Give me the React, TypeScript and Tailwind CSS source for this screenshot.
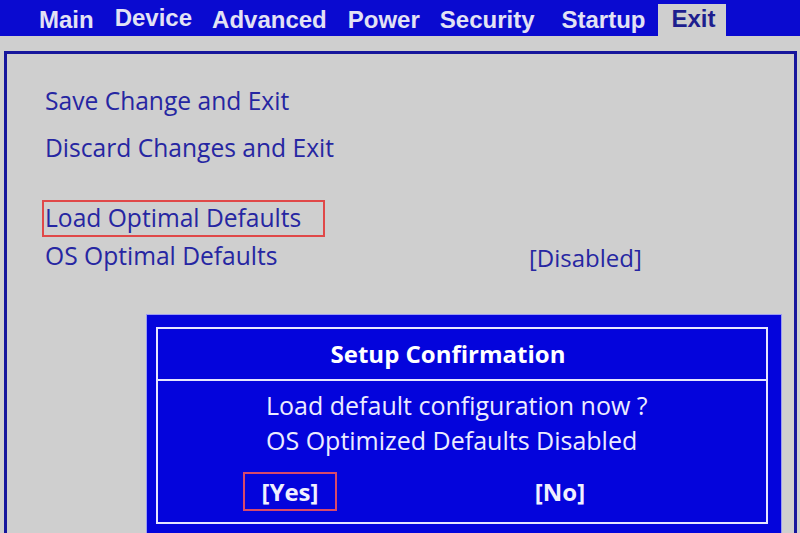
import React from "react";

const tabs = [
  { label: "Main", cls: "ml-[39px]" },
  { label: "Device", cls: "ml-[21px] pb-[5px]" },
  { label: "Advanced", cls: "ml-[20px]" },
  { label: "Power", cls: "ml-[21px]" },
  { label: "Security", cls: "ml-[20px]" },
  { label: "Startup", cls: "ml-[27px]" },
];

export default function App() {
  return (
    <div className="relative w-[800px] h-[533px] overflow-hidden bg-[#cfcfcf]">
      {/* Top tab bar */}
      <div
        className="flex h-[36px] pt-[4px] bg-[#0a0ad0] text-[24px] font-bold leading-none text-[#e2e2f4]"
        style={{ fontFamily: '"Liberation Sans", Arial, sans-serif' }}
      >
        {tabs.map((t) => (
          <div key={t.label} className={`flex items-center ${t.cls}`}>
            {t.label}
          </div>
        ))}
        <div className="ml-[12px] flex items-center w-[68px] pl-[14px] pb-[3px] bg-[#cfcfcf] text-[#1e1e8e]">
          Exit
        </div>
      </div>

      {/* Main frame */}
      <div
        className="mt-[15px] ml-[4px] w-[793px] h-[482px] border-[3px] border-b-0 border-[#16169c] pl-[38px] pt-[29px] text-[24.6px] leading-none text-[#2626a2]"
        style={{ fontFamily: '"Open Sans", "Noto Sans", sans-serif' }}
      >
        <div className="flex items-center h-[36px]">Save Change and Exit</div>
        <div className="flex items-center h-[36px] mt-[11px]">Discard Changes and Exit</div>
        <div className="flex items-center h-[37px] mt-[34px] -ml-[3px] w-[283px] pl-[1px] border-2 border-[#e04848]">
          Load Optimal Defaults
        </div>
        <div className="grid grid-cols-[484px_auto] items-center h-[36px] mt-[1px]">
          <span>OS Optimal Defaults</span>
          <span className="pt-[3px] text-[24px]">[Disabled]</span>
        </div>
      </div>

      {/* Setup Confirmation dialog (overlay) */}
      <div
        className="absolute left-[146px] top-[314px] w-[636px] h-[240px] bg-[#0404dc] border border-[#9c9cf2] pl-[9px] pt-[12px] pr-[13px]"
        style={{ fontFamily: '"Open Sans", "Noto Sans", sans-serif' }}
      >
        <div className="w-[612px] h-[197px] border-2 border-[#e6e6ff] flex flex-col text-[#ececff]">
          <div className="flex items-center justify-center h-[50px] pr-[28px] text-[24px] font-bold leading-none text-white">
            Setup Confirmation
          </div>
          <div className="h-[2px] bg-[#e6e6ff]" />
          <div className="flex flex-col pl-[108px] pt-[7px] text-[25px] leading-none">
            <div className="flex items-center h-[34px]">Load default configuration now ?</div>
            <div className="flex items-center h-[34px] mt-[1px]">OS Optimized Defaults Disabled</div>
          </div>
          <div className="flex pl-[85px] mt-[15px] text-[24px] font-bold leading-none text-[#f0f0ff]">
            <div className="flex items-center justify-center w-[94px] h-[39px] border-2 border-[#d84a6a]">
              [Yes]
            </div>
            <div className="flex items-center justify-center w-[94px] h-[39px] ml-[176px] border-2 border-transparent">
              [No]
            </div>
          </div>
        </div>
      </div>
    </div>
  );
}
